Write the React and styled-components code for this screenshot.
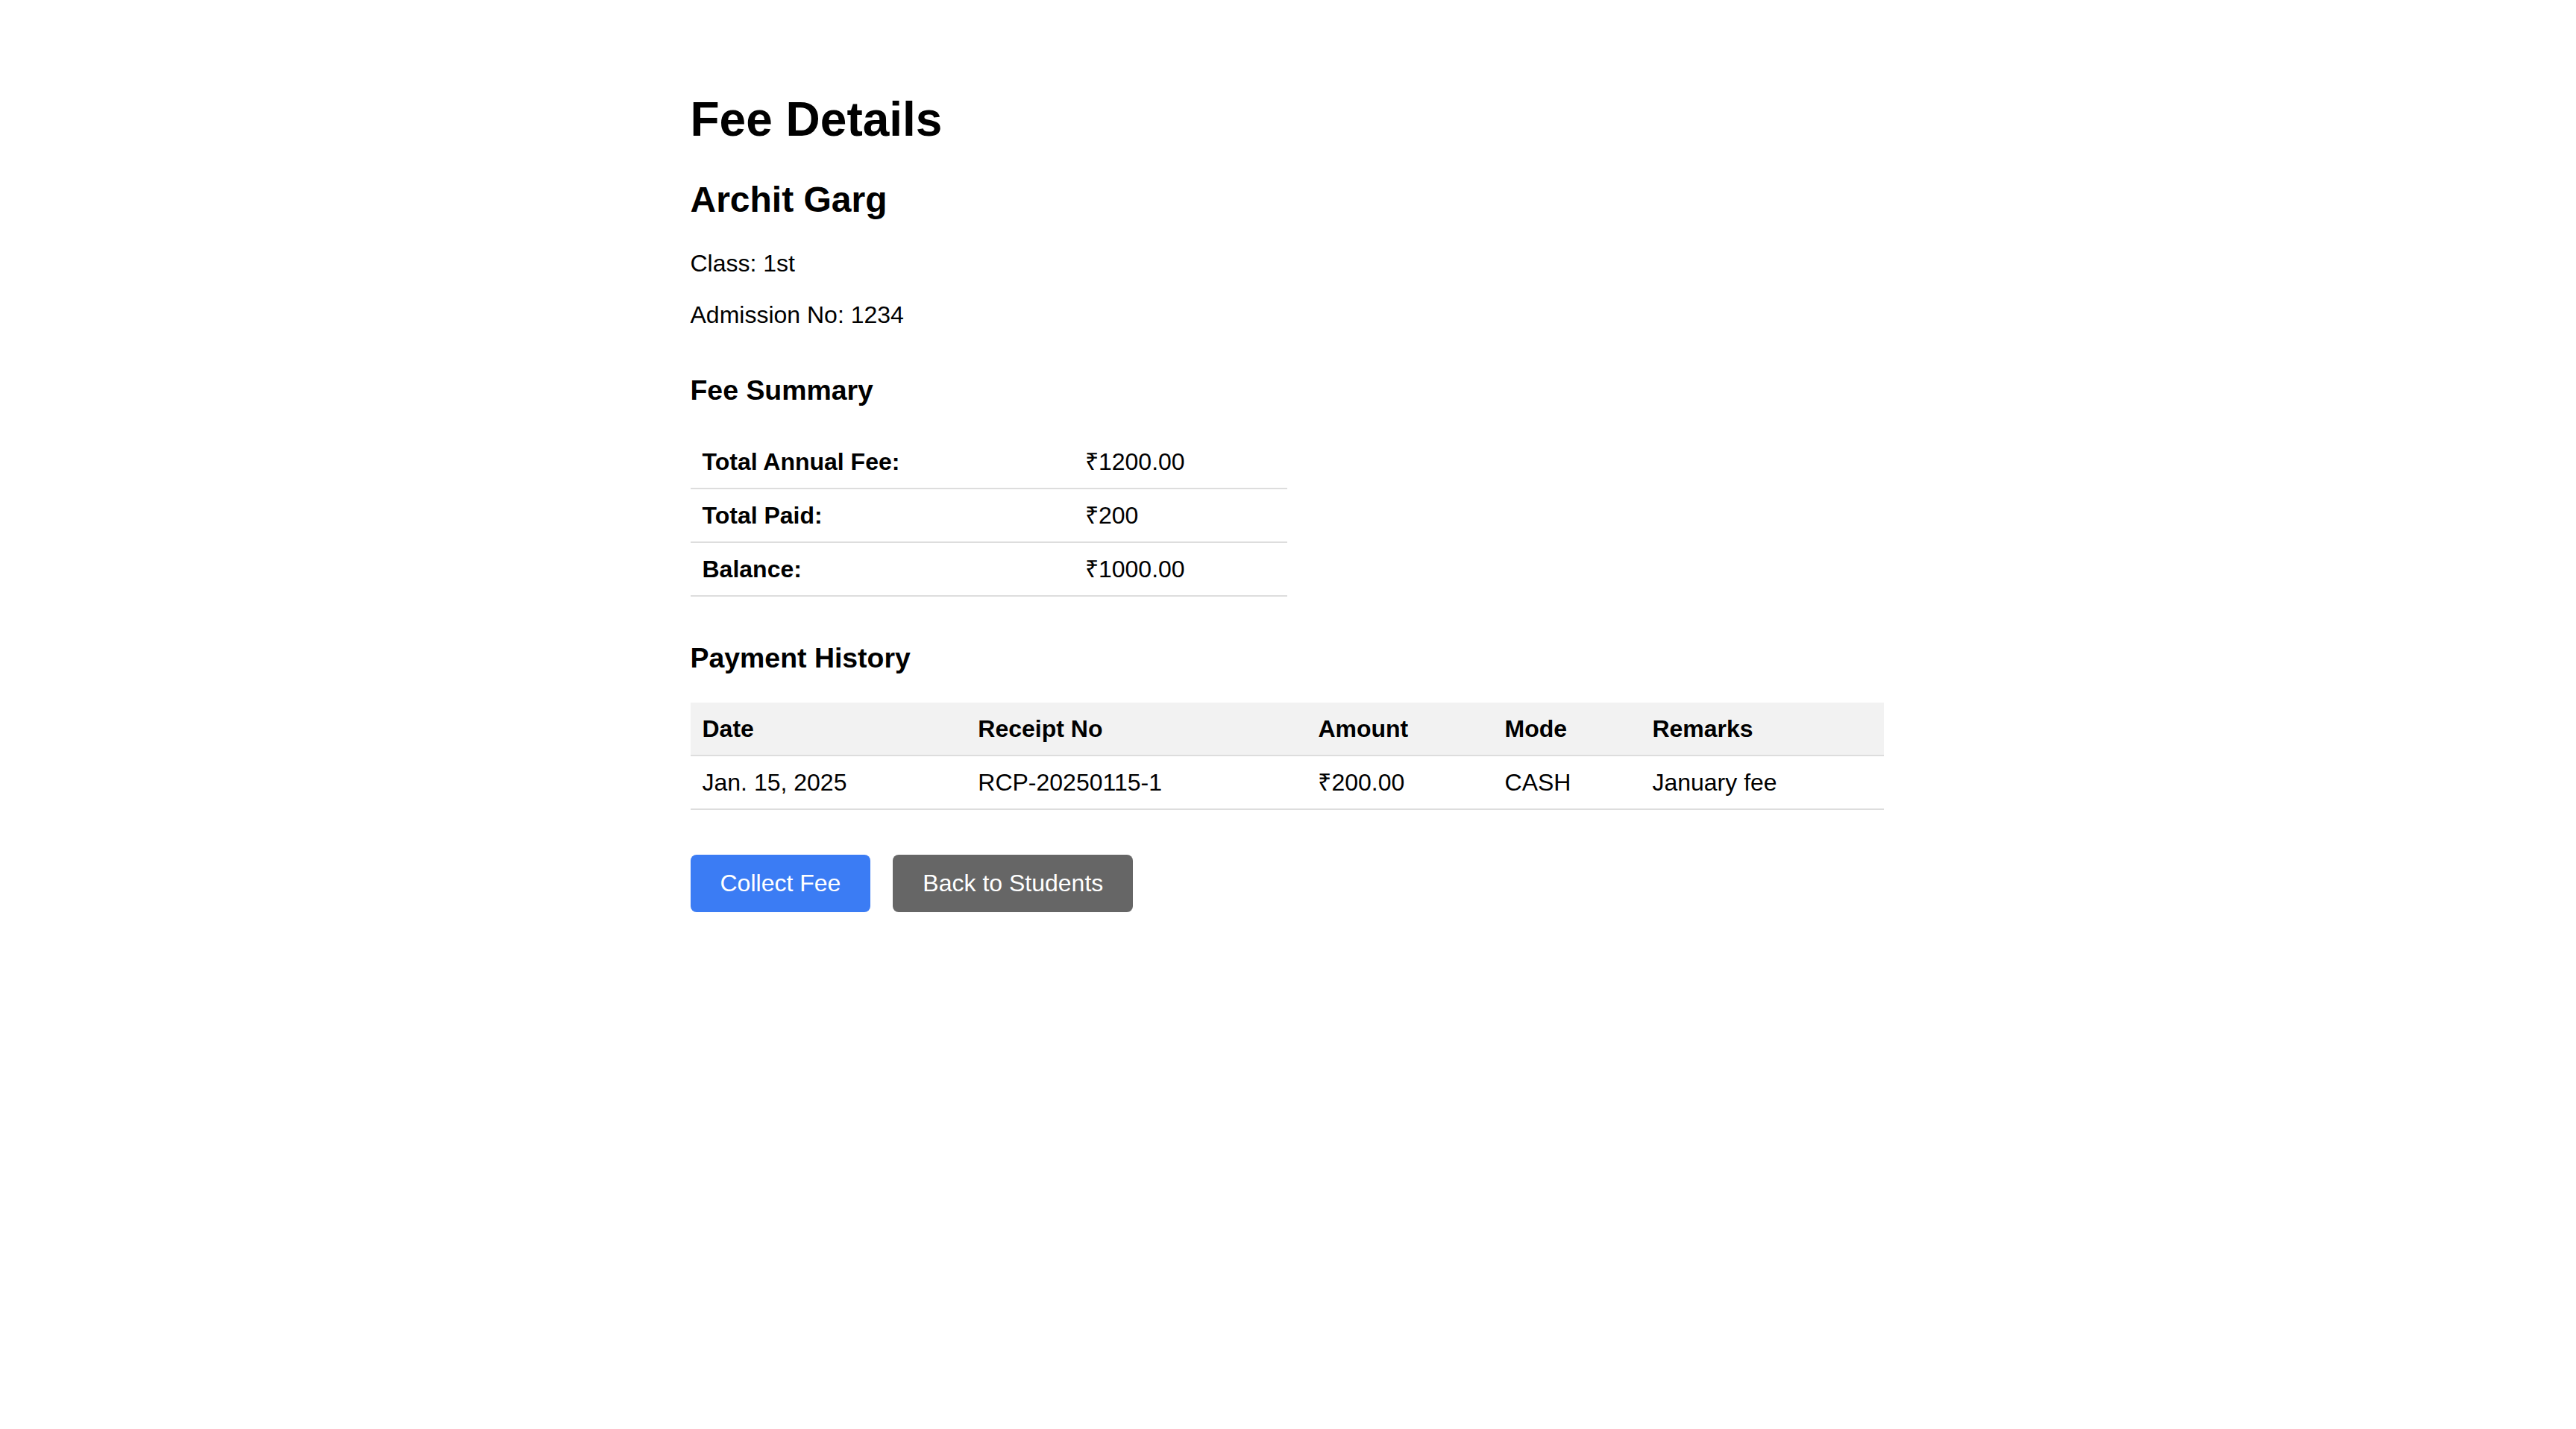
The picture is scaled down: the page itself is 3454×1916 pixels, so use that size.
import styled, { createGlobalStyle } from "styled-components";

const GlobalStyle = createGlobalStyle`
  html, body {
    margin: 0;
    padding: 0;
    background: #fff;
  }
  body {
    font-family: "Liberation Sans", Arial, sans-serif;
    font-size: 32px;
    color: #000;
  }
`;

const summary = [
  { label: "Total Annual Fee:", value: "₹1200.00" },
  { label: "Total Paid:", value: "₹200" },
  { label: "Balance:", value: "₹1000.00" },
];

const payments = [
  {
    date: "Jan. 15, 2025",
    receipt: "RCP-20250115-1",
    amount: "₹200.00",
    mode: "CASH",
    remarks: "January fee",
  },
];

const App = () => {
  return (
    <Page>
      <GlobalStyle />
      <Container>
        <Title>Fee Details</Title>
        <StudentName>Archit Garg</StudentName>
        <Section>
          <Info>Class: 1st</Info>
          <Info>Admission No: 1234</Info>
        </Section>

        <Section>
          <SectionTitle>Fee Summary</SectionTitle>
          <Table $width="50%">
            <tbody>
              {summary.map((row) => (
                <tr key={row.label}>
                  <Th>{row.label}</Th>
                  <Td>{row.value}</Td>
                </tr>
              ))}
            </tbody>
          </Table>
        </Section>

        <Section>
          <SectionTitle>Payment History</SectionTitle>
          <Table $width="100%">
            <thead>
              <tr>
                <Th $head>Date</Th>
                <Th $head>Receipt No</Th>
                <Th $head>Amount</Th>
                <Th $head>Mode</Th>
                <Th $head>Remarks</Th>
              </tr>
            </thead>
            <tbody>
              {payments.map((p) => (
                <tr key={p.receipt}>
                  <Td>{p.date}</Td>
                  <Td>{p.receipt}</Td>
                  <Td>{p.amount}</Td>
                  <Td>{p.mode}</Td>
                  <Td>{p.remarks}</Td>
                </tr>
              ))}
            </tbody>
          </Table>
        </Section>

        <Actions>
          <Button href="#" $variant="primary">
            Collect Fee
          </Button>
          <Button href="#" $variant="secondary">
            Back to Students
          </Button>
        </Actions>
      </Container>
    </Page>
  );
};

const Page = styled.div`
  padding-right: 3px;
`;

const Container = styled.div`
  max-width: 1600px;
  margin: 0 auto;
  padding-top: 80px;
`;

const Title = styled.h1`
  font-size: 64px;
  font-weight: bold;
  margin: 42.88px 0;
`;

const StudentName = styled.h2`
  font-size: 48px;
  font-weight: bold;
  margin: 39.84px 0;
`;

const Section = styled.div`
  margin-bottom: 60px;
`;

const Info = styled.p`
  margin: 32px 0;
`;

const SectionTitle = styled.h3`
  font-size: 37.44px;
  line-height: 45.5px;
  font-weight: bold;
  margin: 37.44px 0;
`;

const Table = styled.table`
  width: ${(p) => p.$width};
  border-collapse: collapse;
  font-size: 32px;
`;

const Th = styled.th`
  text-align: left;
  font-weight: bold;
  padding: 16px;
  line-height: 38px;
  border-bottom: 2px solid #ddd;
  background: ${(p) => (p.$head ? "#f2f2f2" : "transparent")};
`;

const Td = styled.td`
  text-align: left;
  padding: 16px;
  line-height: 38px;
  border-bottom: 2px solid #ddd;
`;

const Actions = styled.div`
  display: flex;
  gap: 30px;
`;

const Button = styled.a`
  display: inline-block;
  padding: 20px 40px;
  font-size: 32px;
  line-height: 36.8px;
  color: #fff;
  text-decoration: none;
  border-radius: 8px;
  background: ${(p) => (p.$variant === "primary" ? "#3b7cf4" : "#666")};
`;

export default App;
